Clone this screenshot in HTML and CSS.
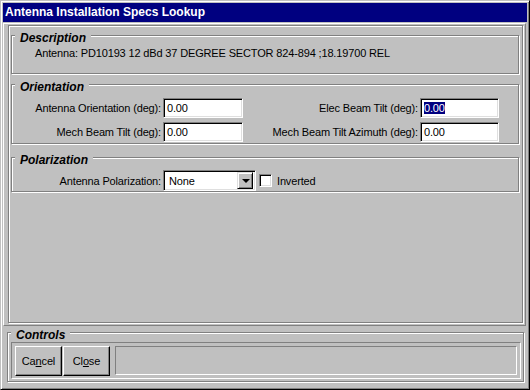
FILE: index.html
```html
<!DOCTYPE html>
<html>
<head>
<meta charset="utf-8">
<link rel="stylesheet" href="styles.css">
</head>
<body>
<div class="window">
  <div class="titlebar">Antenna Installation Specs Lookup</div>
  <div class="client">
    <div class="main">
      <div class="inner">
        <div class="group desc">
          <span class="legend">Description</span>
          <div class="desc-text">Antenna: PD10193 12 dBd 37 DEGREE SECTOR 824-894 ;18.19700 REL</div>
        </div>
        <div class="group orient">
          <span class="legend">Orientation</span>
          <div class="grid">
            <span class="lbl">Antenna Orientation (deg):</span>
            <div class="edit">0.00</div>
            <span class="lbl">Elec Beam Tilt (deg):</span>
            <div class="edit"><span class="sel">0.00</span></div>
            <span class="lbl">Mech Beam Tilt (deg):</span>
            <div class="edit">0.00</div>
            <span class="lbl">Mech Beam Tilt Azimuth (deg):</span>
            <div class="edit">0.00</div>
          </div>
        </div>
        <div class="group polar">
          <span class="legend">Polarization</span>
          <div class="polar-row">
            <span class="lbl lbl-polar">Antenna Polarization:</span>
            <div class="combo">
              <span class="combo-text">None</span>
              <span class="combo-btn"><span class="arrow"></span></span>
            </div>
            <span class="check"></span>
            <span class="check-lbl">Inverted</span>
          </div>
        </div>
      </div>
    </div>
    <div class="group controls">
      <span class="legend">Controls</span>
      <div class="ctl-panel">
        <div class="btn">Ca<u>n</u>cel</div>
        <div class="btn">Cl<u>o</u>se</div>
        <div class="status"></div>
      </div>
    </div>
  </div>
</div>
</body>
</html>
```
FILE: styles.css
```css
* { box-sizing: border-box; }
html, body { margin: 0; padding: 0; background: #c0c0c0; }
body {
  font-family: "Liberation Sans", Arial, sans-serif;
  font-size: 11px;
  letter-spacing: -0.15px;
  color: #000;
}
.window {
  width: 530px;
  height: 390px;
  border: 1px solid;
  border-color: #c0c0c0 #000 #000 #c0c0c0;
  box-shadow: inset 1px 1px 0 #fff, inset -1px -1px 0 #808080;
  padding: 2px;
  display: flex;
  flex-direction: column;
  background: #c0c0c0;
}
.titlebar {
  height: 19px;
  line-height: 19px;
  background: #000080;
  color: #fff;
  font-weight: bold;
  font-size: 12px;
  letter-spacing: 0;
  padding-left: 2px;
  flex: none;
}
.client {
  flex: 1;
  display: flex;
  flex-direction: column;
}
.main {
  margin: 1px 1px 0 0;
  height: 303px;
  border: 1px solid;
  border-color: #fff #808080 #808080 #fff;
  display: flex;
  flex-direction: column;
}
.inner {
  flex: 1;
  margin: 1px 2px 2px 4px;
  border: 1px solid #808080;
  box-shadow: inset 1px 1px 0 #fff, 1px 1px 0 #fff;
  padding: 0 3px 0 2px;
  display: flex;
  flex-direction: column;
}
.group {
  border: 1px solid #808080;
  box-shadow: inset 1px 1px 0 #fff, 1px 1px 0 #fff;
  display: flex;
  flex-direction: column;
  align-items: flex-start;
}
.legend {
  display: block;
  margin: -5px 0 0 3px;
  padding: 0 5px;
  height: 14px;
  line-height: 14px;
  background: #c0c0c0;
  font-weight: bold;
  font-style: italic;
  font-size: 12px;
  letter-spacing: 0;
}
.desc { margin-top: 9px; height: 39px; }
.desc-text { margin: 2px 0 0 23px; line-height: 13px; }
.orient { margin-top: 10px; height: 60px; }
.grid {
  margin-top: 4px;
  display: grid;
  grid-template-columns: 151px 80px 177px 79px;
  grid-auto-rows: 20px;
  row-gap: 4px;
  align-items: center;
}
.lbl { text-align: right; padding-right: 2px; white-space: nowrap; }
.edit {
  height: 20px;
  background: #fff;
  border: 1px solid;
  border-color: #808080 #fff #fff #808080;
  box-shadow: inset 1px 1px 0 #000, inset -1px -1px 0 #dfdfdf;
  padding-left: 3px;
  line-height: 18px;
}
.sel {
  display: inline-block;
  background: #000080;
  color: #fff;
  line-height: 12px;
  vertical-align: middle;
  margin-top: -2px;
}
.polar { margin-top: 13px; height: 35px; }
.polar-row {
  margin-top: 3px;
  display: flex;
  align-items: center;
}
.lbl-polar { width: 151px; }
.combo {
  width: 93px;
  height: 21px;
  background: #fff;
  border: 1px solid;
  border-color: #808080 #fff #fff #808080;
  box-shadow: inset 1px 1px 0 #000, inset -1px -1px 0 #dfdfdf;
  padding: 2px 2px 2px 5px;
  display: flex;
  align-items: center;
  justify-content: space-between;
}
.combo-btn {
  width: 16px;
  height: 17px;
  background: #c0c0c0;
  border: 1px solid;
  border-color: #dfdfdf #000 #000 #dfdfdf;
  box-shadow: inset 1px 1px 0 #fff, inset -1px -1px 0 #808080;
  display: flex;
  align-items: center;
  justify-content: center;
}
.arrow {
  width: 0;
  height: 0;
  border-left: 4px solid transparent;
  border-right: 4px solid transparent;
  border-top: 4px solid #000;
  margin-left: 1px;
}
.check {
  width: 13px;
  height: 13px;
  margin-left: 3px;
  background: #fff;
  border: 1px solid;
  border-color: #808080 #fff #fff #808080;
  box-shadow: inset 1px 1px 0 #000, inset -1px -1px 0 #dfdfdf;
}
.check-lbl { margin-left: 5px; }
.controls {
  margin: 6px 0 0 4px;
  width: 517px;
  height: 50px;
}
.ctl-panel {
  margin-left: 3px;
  width: 510px;
  height: 37px;
  border: 1px solid;
  border-color: #808080 #fff #fff #808080;
  padding: 3px;
  display: flex;
  align-items: flex-start;
}
.btn {
  width: 47px;
  height: 30px;
  margin-right: 1px;
  border: 1px solid;
  border-color: #fff #000 #000 #fff;
  box-shadow: inset -1px -1px 0 #808080;
  display: flex;
  align-items: center;
  justify-content: center;
}
.btn u { text-decoration-thickness: 1px; text-underline-offset: 1px; }
.status {
  margin-left: 4px;
  width: 402px;
  height: 29px;
  border: 1px solid;
  border-color: #808080 #fff #fff #808080;
}
```
